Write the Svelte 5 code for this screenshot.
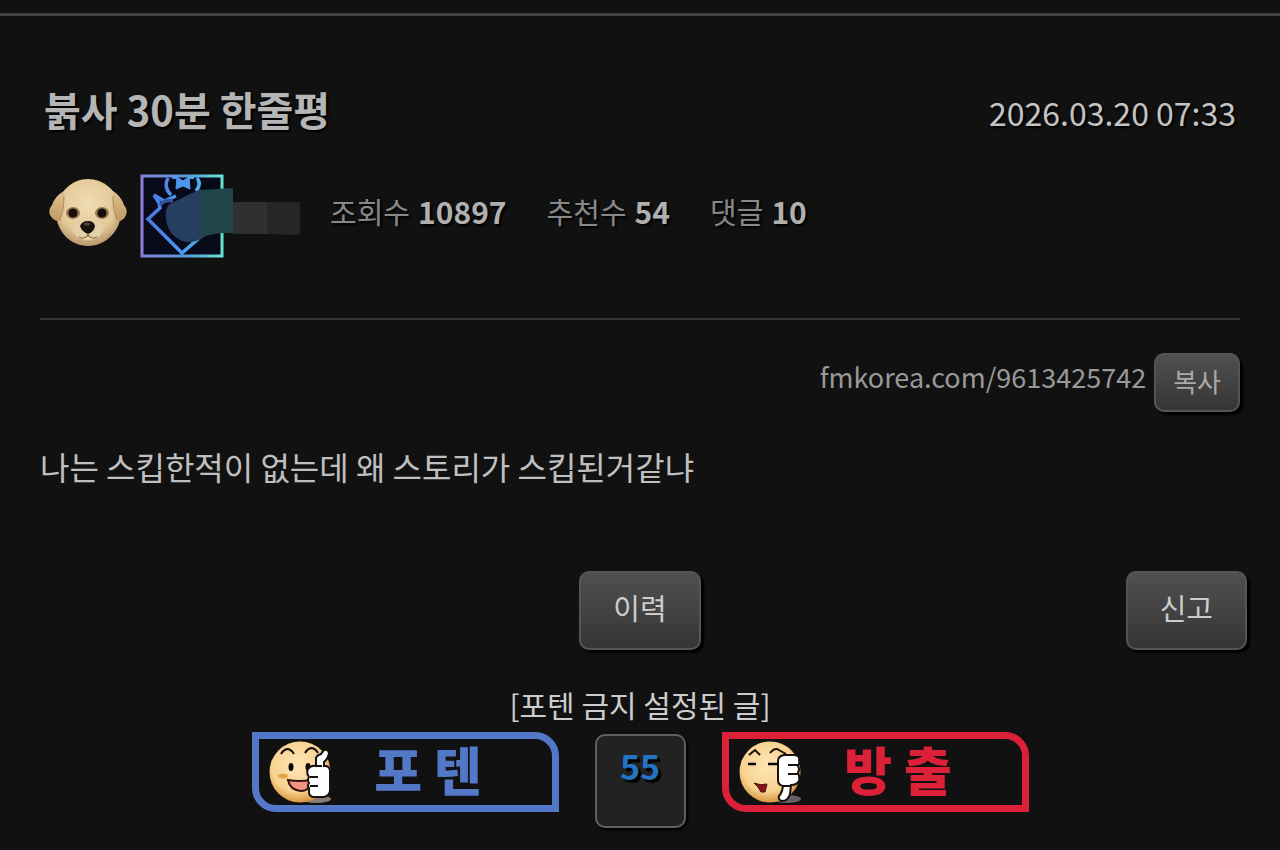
<script>
  const stats = [
    { label: '조회수', value: 10897 },
    { label: '추천수', value: 54 },
    { label: '댓글', value: 10 }
  ];
  let votes = $state(55);
</script>

<main>
  <article>
    <header>
      <div class="title-row">
        <h1>붉사 30분 한줄평</h1>
        <time datetime="2026-03-20T07:33">2026.03.20 07:33</time>
      </div>
      <div class="meta">
        <div class="author">
          <svg width="80" height="84" viewBox="0 0 80 84" aria-hidden="true">
            <defs>
              <radialGradient id="fur" cx="48%" cy="38%" r="62%">
                <stop offset="0" stop-color="#f1dcb4" />
                <stop offset=".7" stop-color="#e3c898" />
                <stop offset="1" stop-color="#b8976a" />
              </radialGradient>
              <linearGradient id="ear" x1="0" y1="0" x2="0" y2="1">
                <stop offset="0" stop-color="#dfc190" />
                <stop offset="1" stop-color="#c09a64" />
              </linearGradient>
              <filter id="soft"><feGaussianBlur stdDeviation=".7" /></filter>
            </defs>
            <g filter="url(#soft)">
              <path d="M40 5C55 5 70 16 73 36C74 56 58 72 40 72C22 72 8 57 8 38C10 17 24 5 40 5Z" fill="url(#fur)" />
              <path d="M16 17Q7 22 4 31Q0 36 2 41Q6 48 12 47Q17 34 16 17Z" fill="url(#ear)" />
              <path d="M65 17Q73 22 76 31Q80 36 78 41Q75 48 69 47Q63 34 65 17Z" fill="url(#ear)" />
              <path d="M16 22Q17 35 12 46M65 22Q64 35 69 46" fill="none" stroke="#b08c5c" stroke-width="1" />
              <ellipse cx="40" cy="54" rx="15" ry="12" fill="#e6cfa6" />
              <path d="M31 63Q36 66 40 61Q44 66 49 63M40 58V63" fill="none" stroke="#75613f" stroke-width="1" />
              <ellipse cx="25" cy="39" rx="7" ry="6" fill="#9a7a4e" />
              <ellipse cx="54" cy="39" rx="7" ry="6" fill="#9a7a4e" />
              <circle cx="25" cy="39" r="4.600" fill="#15100c" />
              <circle cx="54" cy="39" r="4.600" fill="#15100c" />
              <path d="M32 52Q34 47 40 47Q46 47 47 52Q46 58 40 60Q34 58 32 52Z" fill="#161311" />
              <ellipse cx="39" cy="50" rx="3" ry="1.500" fill="#504741" />
            </g>
          </svg>
          <svg width="160" height="84" viewBox="0 0 160 84" aria-hidden="true">
            <defs>
              <linearGradient id="neon" gradientUnits="userSpaceOnUse" x1="0" y1="0" x2="84" y2="0">
                <stop offset="0" stop-color="#8a80dc" />
                <stop offset=".55" stop-color="#569bdc" />
                <stop offset="1" stop-color="#62e8d0" />
              </linearGradient>
              <linearGradient id="edge" gradientUnits="userSpaceOnUse" x1="0" y1="0" x2="84" y2="0">
                <stop offset="0" stop-color="#4a6fe0" />
                <stop offset=".5" stop-color="#4f97ee" />
                <stop offset="1" stop-color="#54d0e2" />
              </linearGradient>
              <filter id="glow" x="-10%" y="-10%" width="120%" height="120%"><feGaussianBlur stdDeviation=".7" /></filter>
            </defs>
            <rect x="2" y="2" width="80" height="80" fill="#080a1a" stroke="url(#neon)" stroke-width="3" />
            <g filter="url(#glow)" fill="none" stroke="url(#edge)" stroke-width="3.500">
              <path d="M36 22L24 27L14 21L19 29L20 34L8 45L42 79L66 58" />
              <path d="M31 21Q23 13 28 4M56 17Q62 10 57 4" />
              <path d="M37 3L43 7L49 3L50 15L43 12L36 15Z" fill="#4f97ee" stroke-width="1" />
              <path d="M20 31Q25 25 33 27" stroke="#34539b" />
              <path d="M32 4H38M48 4H54" stroke-width="2" />
            </g>
            <path d="M93 28H127V60H93Z" fill="#303030" />
            <path d="M127 28H160V59Q158 61 152 61L127 60Z" fill="#262626" />
            <path d="M61 16L93 14V59H82Q70 60 61 64Z" fill="#20464c" />
            <path d="M61 15V65Q52 70 42 67Q28 61 26 45Q24 31 34 28Q45 22 61 15Z" fill="#263e60" />
          </svg>
        </div>
        <dl>
          {#each stats as stat}
            <div><dt>{stat.label}</dt><dd>{stat.value}</dd></div>
          {/each}
        </dl>
      </div>
    </header>

    <div class="link-row">
      <a href="#post">fmkorea.com/9613425742</a>
      <button class="raised copy" type="button">복사</button>
    </div>

    <p class="content">나는 스킵한적이 없는데 왜 스토리가 스킵된거같냐</p>
  </article>

  <div class="actions">
    <button class="raised history" type="button">이력</button>
    <button class="raised report" type="button">신고</button>
  </div>

  <section class="vote">
    <p>[포텐 금지 설정된 글]</p>
    <div class="vote-row">
      <button class="ballot up" type="button" onclick={() => votes++}>
        <svg width="66" height="66" viewBox="0 0 66 66" aria-hidden="true">
          <defs>
            <radialGradient id="face" cx="46%" cy="40%" r="60%">
              <stop offset="0" stop-color="#ffe5b4" />
              <stop offset=".7" stop-color="#f8d391" />
              <stop offset="1" stop-color="#d8963f" />
            </radialGradient>
          </defs>
          <ellipse cx="48" cy="60" rx="15" ry="4" fill="#8b7c75" />
          <circle cx="32" cy="33" r="30.500" fill="url(#face)" />
          <path d="M13 15Q15 11 19 10Q23 10 26 15M37 14Q39 10 43 9Q47 9 50 14" fill="none" stroke="#16110b" stroke-width="2" />
          <ellipse cx="23" cy="28" rx="2.500" ry="4" fill="#0b0907" />
          <ellipse cx="40" cy="28" rx="2.500" ry="4" fill="#0b0907" />
          <ellipse cx="15" cy="37" rx="5" ry="2.500" fill="#e6a54a" />
          <path d="M20 41Q31 43 43 41Q42 52 33 52Q22 51 20 41Z" fill="#f4947e" stroke="#33130e" stroke-width="2" />
          <path d="M48 27V19Q49 16 53 15L56 11Q60 10 61 14Q60 20 56 23V27H58Q62 28 62 32V52Q61 57 56 58H45Q41 57 41 53V49Q39 47 41 44Q39 41 41 38Q38 34 40 30Q43 26 48 27Z" fill="#fff" stroke="#17120f" stroke-width="2" />
          <path d="M48 27H54M42 38H50M42 47H50" fill="none" stroke="#17120f" stroke-width="2" />
        </svg>
        <span>포 텐</span>
      </button>
      <output aria-label="추천수">{votes}</output>
      <button class="ballot down" type="button" onclick={() => votes--}>
        <svg width="66" height="66" viewBox="0 0 66 66" aria-hidden="true">
          <ellipse cx="49" cy="60" rx="14" ry="4" fill="#686068" />
          <circle cx="32" cy="33" r="30.500" fill="url(#face)" />
          <path d="M11 16L17 11L22 16M32 14Q37 8 41 11L48 15" fill="none" stroke="#16110b" stroke-width="2" />
          <path d="M10 25H18M30 25H41" stroke="#0b0907" stroke-width="2.500" />
          <path d="M16 44Q23 47 29 45L27 53L23 53Q20 47 16 44Z" fill="#861518" stroke="#480b0c" stroke-width="1" />
          <path d="M46 16H57Q62 17 61 21Q62 24 60 27Q62 30 60 34Q62 38 61 42Q59 46 53 46L52 55Q50 62 44 62Q40 61 41 57Q44 54 45 47Q40 46 40 41V22Q40 17 46 16Z" fill="#fff" stroke="#17120f" stroke-width="2" />
          <path d="M50 26H60M50 35H60M44 47H53" fill="none" stroke="#17120f" stroke-width="2" />
        </svg>
        <span>방 출</span>
      </button>
    </div>
  </section>
</main>

<style>
  :global(body) {
    margin: 0;
    background: #111;
  }

  main {
    padding: 13px 0 20px;
    color: #bbb;
    font-family: 'Noto Sans CJK KR', 'Noto Sans', sans-serif;
  }

  h1, p, dl, dd { margin: 0; }

  article {
    border-top: 3px solid #444;
    padding: 64px 40px 0;
  }

  header {
    border-bottom: 2px solid #333;
    padding-bottom: 60px;
  }

  .title-row {
    display: flex;
    justify-content: space-between;
    align-items: baseline;
    padding: 0 4px;
    text-shadow: 2px 2px 2px #000;
  }

  h1 {
    font-size: 40px;
    line-height: 58px;
    font-weight: 700;
    color: #b5b5b5;
  }

  time {
    font-size: 32px;
    line-height: 48px;
    color: #c4c4c4;
  }

  .meta {
    display: flex;
    align-items: center;
    gap: 30px;
    padding: 36px 8px 0;
  }

  .author {
    display: flex;
    gap: 12px;
  }

  dl {
    display: flex;
    gap: 40px;
    line-height: 48px;
    padding-bottom: 10px;
    text-shadow: 2px 2px 2px #000;
  }

  dl div {
    display: flex;
    gap: 8px;
  }

  dt {
    font-size: 29px;
    color: #888;
  }

  dd {
    font-size: 30px;
    font-weight: 700;
    color: #b0b0b0;
  }

  .link-row {
    display: flex;
    justify-content: flex-end;
    gap: 8px;
    padding-top: 33px;
  }

  .link-row a {
    font-size: 27px;
    line-height: 48px;
    color: #999;
    text-decoration: none;
  }

  .raised {
    box-sizing: border-box;
    border: 2px solid #555;
    border-radius: 10px;
    background: linear-gradient(#505050, #353535);
    box-shadow: 3px 3px 2px #000;
    color: #ccc;
    font-family: inherit;
    font-size: 29px;
    line-height: 44px;
    padding: 12px 32px 19px;
  }

  .raised.copy {
    font-size: 26px;
    line-height: 40px;
    padding: 6px 17px 9px;
    color: #aaa;
  }

  .content {
    padding-top: 30px;
    font-size: 32px;
    line-height: 48px;
    color: #c0c0c0;
  }

  .actions {
    display: grid;
    grid-template-columns: 1fr auto 1fr;
    padding: 81px 33px 0;
  }

  .history { grid-column: 2; }

  .report {
    grid-column: 3;
    justify-self: end;
  }

  .vote {
    padding-top: 32px;
    text-align: center;
  }

  .vote p {
    font-size: 30px;
    line-height: 44px;
    color: #ccc;
  }

  .vote-row {
    display: flex;
    justify-content: center;
    align-items: flex-start;
    gap: 36px;
    padding-top: 6px;
  }

  .ballot {
    box-sizing: border-box;
    display: flex;
    align-items: center;
    width: 307px;
    height: 80px;
    padding: 0 9px;
    border: 7px solid currentColor;
    border-radius: 0 24px 0 24px;
    background: none;
    font-family: inherit;
    font-size: 52px;
    font-weight: 900;
    line-height: 66px;
  }

  .ballot span {
    flex: 1;
    padding-right: 20px;
    padding-bottom: 6px;
  }

  .up { color: #5478c8; }

  .down { color: #dc2038; }

  output {
    box-sizing: border-box;
    width: 91px;
    height: 94px;
    margin-top: 2px;
    padding-top: 8px;
    border: 2px solid #606060;
    border-radius: 10px;
    background: #222;
    box-shadow: 2px 2px 3px #000;
    color: #2474c4;
    font-size: 34px;
    font-weight: 700;
    line-height: 44px;
    text-shadow: 3px 3px 1px #000;
  }
</style>
